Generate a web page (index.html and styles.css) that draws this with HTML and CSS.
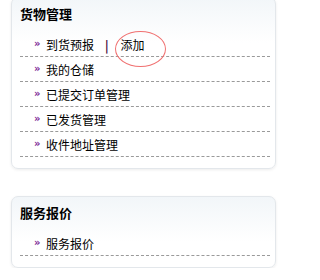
FILE: index.html
```html
<!DOCTYPE html>
<html lang="zh-CN">
<head>
<meta charset="utf-8">
<title>货物管理</title>
<link rel="stylesheet" href="styles.css">
</head>
<body>
<div class="page">
  <div class="panel panel-first">
    <div class="panel-title">货物管理</div>
    <ul class="menu">
      <li class="menu-item">
        <span class="bullet">»</span><a class="link" href="#">到货预报</a><span class="sep">|</span><a class="link add" href="#">添加</a>
        <span class="circle"></span>
      </li>
      <li class="menu-item"><span class="bullet">»</span><a class="link" href="#">我的仓储</a></li>
      <li class="menu-item"><span class="bullet">»</span><a class="link" href="#">已提交订单管理</a></li>
      <li class="menu-item"><span class="bullet">»</span><a class="link" href="#">已发货管理</a></li>
      <li class="menu-item"><span class="bullet">»</span><a class="link" href="#">收件地址管理</a></li>
    </ul>
  </div>
  <div class="panel">
    <div class="panel-title">服务报价</div>
    <ul class="menu">
      <li class="menu-item"><span class="bullet">»</span><a class="link" href="#">服务报价</a></li>
    </ul>
  </div>
</div>
</body>
</html>
```
FILE: styles.css
```css
html, body {
  margin: 0;
  padding: 0;
  background: #ffffff;
}
body {
  font-family: "Noto Sans CJK SC", "Liberation Sans", sans-serif;
  color: #000;
}
.page {
  display: flex;
  flex-direction: column;
  gap: 27px;
  padding-left: 11px;
  width: 265px;
}
.panel {
  border: 1px solid #e3e7eb;
  border-radius: 7px;
  background: linear-gradient(to bottom, #f2f6f9 0, #ffffff 45px);
  box-shadow: 0 1px 3px rgba(0, 0, 0, 0.08);
  padding: 0 5px 11px 8px;
}
.panel-first {
  margin-top: -3px;
}
.panel-title {
  font-size: 13px;
  font-weight: bold;
  line-height: 16px;
  padding: 8px 0 10px 0;
}
.menu {
  list-style: none;
  margin: 0;
  padding: 0;
}
.menu-item {
  position: relative;
  display: flex;
  align-items: center;
  height: 24px;
  border-bottom: 1px dashed #9a9a9a;
  padding-left: 14px;
  font-size: 12px;
}
.bullet {
  color: #7d2a95;
  font-size: 10px;
  font-weight: bold;
  width: 12px;
  line-height: 1;
  font-family: "DejaVu Sans", sans-serif;
}
.link {
  color: #000;
  text-decoration: none;
}
.sep {
  color: #4a1040;
  font-weight: bold;
  margin: 0 12px 0 11px;
}
.circle {
  position: absolute;
  left: 95px;
  top: -1px;
  width: 49px;
  height: 34px;
  border: 1px solid #f07070;
  border-radius: 50%;
}
```
